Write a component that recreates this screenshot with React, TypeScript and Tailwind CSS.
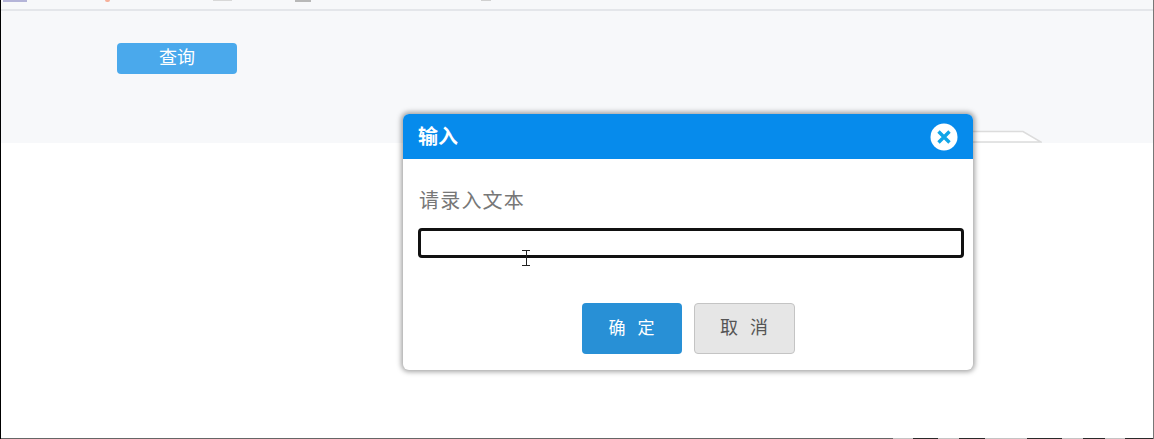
const cjk = '[font-family:"Liberation_Sans","Noto_Sans_CJK_SC",sans-serif]';

// dark/light strip along the bottom edge, taken left to right from the screenshot
const EDGE_SEGMENTS = [
  { width: 892, color: 'bg-[#666666]' },
  { width: 20, color: 'bg-[#c4c4c4]' },
  { width: 25, color: 'bg-[#2a2a2a]' },
  { width: 21, color: 'bg-[#c4c4c4]' },
  { width: 26, color: 'bg-[#2a2a2a]' },
  { width: 42, color: 'bg-[#c4c4c4]' },
  { width: 35, color: 'bg-[#2a2a2a]' },
  { width: 21, color: 'bg-[#c4c4c4]' },
  { width: 22, color: 'bg-[#2a2a2a]' },
  { width: 20, color: 'bg-[#c4c4c4]' },
  { width: 28, color: 'bg-[#2a2a2a]' },
];

function CloseIcon() {
  return (
    <svg width="28" height="28" viewBox="0 0 28 28">
      <circle cx="14" cy="14" r="13.5" fill="#ffffff" />
      <path d="M8.5 8.5 L19.5 19.5 M19.5 8.5 L8.5 19.5" stroke="#10a5e8" strokeWidth="3.4" />
    </svg>
  );
}

function PeekIcons() {
  return (
    <div className="flex h-[2px] items-start">
      <span className="ml-[2px] h-[2px] w-[24px] bg-[#b4b4d8]" />
      <span className="ml-[78px] h-[2px] w-[5px] rounded-b-full bg-[#f6b09a]" />
      <span className="ml-[103px] h-[1px] w-[19px] bg-[#d8d8d8]" />
      <span className="ml-[63px] h-[2px] w-[16px] bg-[#b8b8b8]" />
      <span className="ml-[170px] h-[1px] w-[10px] bg-[#d0d0d0]" />
    </div>
  );
}

export default function App() {
  return (
    <div className={`relative flex h-[439px] w-[1154px] flex-col overflow-hidden border-r border-l border-r-[#777777] border-l-black bg-white ${cjk}`}>
      {/* Query panel */}
      <div className="h-[143px] bg-[#f7f8fa]">
        <div className="h-[11px] border-b-2 border-[#e4e6ea]">
          <PeekIcons />
        </div>
        <button className="mt-[32px] ml-[116px] flex h-[31px] w-[120px] items-center justify-center rounded-[4px] bg-[#4aa9ec] text-[18px] text-white">
          查询
        </button>
      </div>

      {/* Bottom edge */}
      <div className="mt-auto flex h-[1px]">
        {EDGE_SEGMENTS.map((seg, i) => (
          <span key={i} className={seg.color} style={{ width: seg.width }} />
        ))}
      </div>

      {/* Tab peeking out behind the dialog */}
      <svg className="absolute top-[130px] left-[971px]" width="70" height="13" viewBox="0 0 70 13">
        <path d="M0 1.5 H51 L69 12 H0 Z" fill="#ffffff" stroke="#dcdcdc" strokeWidth="1.5" />
      </svg>

      {/* Input dialog */}
      <div className="absolute top-[114px] left-[402px] flex h-[256px] w-[570px] flex-col overflow-hidden rounded-[6px] bg-white shadow-[0_0_5px_2px_rgba(0,0,0,0.35)]">
        <div className="flex h-[45px] items-center justify-between bg-[#068bec] px-[15px]">
          <span className="text-[20px] leading-[28px] font-bold text-white">输入</span>
          <CloseIcon />
        </div>
        <div className="flex flex-1 flex-col">
          <p className="mt-[28px] ml-[16px] text-[20px] leading-[28px] tracking-[1.2px] text-[#777777]">请录入文本</p>
          <input className="mt-[13px] ml-[15px] h-[30px] w-[546px] rounded-[4px] border-[3px] border-[#111111] bg-white outline-none" />
          <div className="mt-[45px] flex justify-center gap-[12px]">
            <button className="h-[51px] w-[100px] rounded-[4px] bg-[#2890d6] pl-[12px] text-[17px] tracking-[12px] text-white">确定</button>
            <button className="h-[51px] w-[101px] rounded-[4px] border border-[#c4c4c4] bg-[#e6e6e6] pl-[12px] text-[18px] tracking-[12px] text-[#555555]">取消</button>
          </div>
        </div>
      </div>

      {/* I-beam cursor */}
      <svg className="absolute top-[250px] left-[520px]" width="10" height="16" viewBox="0 0 10 16">
        <path d="M1 0.5 H9 M1 15.5 H9 M5.5 0.5 V15.5" stroke="#222222" strokeWidth="1" fill="none" />
      </svg>
    </div>
  );
}
